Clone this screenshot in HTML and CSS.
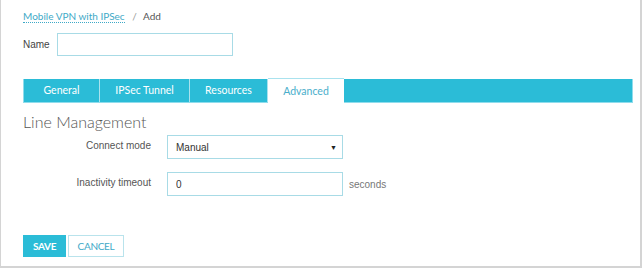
FILE: index.html
```html
<!DOCTYPE html>
<html lang="en">
<head>
  <meta charset="UTF-8">
  <title>Mobile VPN with IPSec - Add</title>
  <link rel="stylesheet" href="styles.css">
</head>
<body>
  <div class="page">

    <!-- Breadcrumb -->
    <div class="crumbs">
      <a class="crumb-link" href="#">Mobile VPN with IPSec</a>
      <span class="crumb-sep">/</span>
      <span class="crumb-current">Add</span>
    </div>

    <div class="name-row">
      <label class="name-label">Name</label>
      <input class="text-input name-input" type="text">
    </div>

    <!-- Tabs -->
    <div class="tabs">
      <div class="tab tab-general">General</div>
      <div class="tab tab-tunnel">IPSec Tunnel</div>
      <div class="tab tab-resources">Resources</div>
      <div class="tab active">Advanced</div>
    </div>

    <h2 class="section-title">Line Management</h2>

    <div class="form-grid">
      <label class="field-label">Connect mode</label>
      <div class="select-box">
        <span>Manual</span>
        <span class="caret">&#9660;</span>
      </div>
      <span></span>

      <label class="field-label">Inactivity timeout</label>
      <input class="text-input" type="text" value="0">
      <span class="unit">seconds</span>
    </div>

    <div class="actions">
      <button class="btn btn-save">SAVE</button>
      <button class="btn btn-cancel">CANCEL</button>
    </div>

  </div>
</body>
</html>
```

FILE: styles.css
```css
body {
  margin: 0;
  padding: 0;
  font-family: Lato, "Open Sans", sans-serif;
  background: #fff;
  color: #555;
}

.page {
  box-sizing: border-box;
  width: 642px;
  height: 268px;
  border: 1px solid #d4d4d4;
  border-top: none;
  border-right-width: 2px;
  border-bottom-width: 2px;
  padding: 9px 0 0 22px;
}

/* Breadcrumb */
.crumbs {
  font-size: 10px;
  height: 20px;
  line-height: 15px;
}

.crumb-link {
  color: #3ea9c7;
  text-decoration: none;
  border-bottom: 1px dotted #3ea9c7;
}

.crumb-sep {
  color: #999;
  margin: 0 4px 0 5px;
}

.crumb-current {
  color: #555;
}

.name-row {
  display: flex;
  align-items: center;
  gap: 7px;
  height: 23px;
  margin-top: 4px;
}

.name-label {
  font-family: "Liberation Sans", Arial, sans-serif;
  font-size: 10px;
  color: #444;
}

.text-input {
  box-sizing: border-box;
  width: 176px;
  height: 24px;
  border: 1px solid #a8dbe6;
  padding: 0 8px;
  font-family: "Liberation Sans", Arial, sans-serif;
  font-size: 10px;
  color: #333;
  outline: none;
}

.name-input {
  height: 23px;
}

/* Tabs */
.tabs {
  display: flex;
  width: 610px;
  height: 24px;
  margin-top: 23px;
  background: #2bbcd7;
  border: 1px solid #8fdcec;
  border-top: none;
  box-sizing: border-box;
}

.tab {
  color: #fff;
  font-size: 10.5px;
  line-height: 23px;
  text-align: center;
  border-right: 1px solid #a9e2ee;
}

.tab-general {
  width: 75px;
}

.tab-tunnel {
  width: 89px;
}

.tab-resources {
  width: 77px;
}

.tab.active {
  width: 76px;
  background: #fff;
  color: #49aecb;
  border-top: 1px solid #a9e2ee;
  margin-top: -1px;
  height: 25px;
  line-height: 24px;
  border-right: none;
}

.section-title {
  margin: 9px 0 0 0;
  font-size: 16px;
  font-weight: 300;
  color: #555;
  line-height: 20px;
}

/* Form */
.form-grid {
  display: grid;
  grid-template-columns: 128px 176px auto;
  column-gap: 16px;
  row-gap: 13px;
  align-items: center;
  margin-top: 3px;
}

.field-label {
  font-family: "Liberation Sans", Arial, sans-serif;
  font-size: 10px;
  color: #555;
  text-align: right;
  margin-top: -3px;
}

.select-box {
  box-sizing: border-box;
  height: 24px;
  border: 1px solid #a8dbe6;
  padding: 0 5px 0 8px;
  display: flex;
  justify-content: space-between;
  align-items: center;
  font-family: "Liberation Sans", Arial, sans-serif;
  font-size: 10px;
  color: #333;
}

.caret {
  font-size: 7px;
  color: #222;
}

.form-grid .unit {
  margin-left: -10px;
  font-family: "Liberation Sans", Arial, sans-serif;
  font-size: 10px;
  color: #777;
}

/* Buttons */
.actions {
  display: flex;
  gap: 2px;
  margin-top: 39px;
}

.btn {
  height: 22px;
  font-family: Lato, sans-serif;
  font-size: 10px;
  font-weight: bold;
  letter-spacing: -0.3px;
  padding: 0;
  cursor: pointer;
  box-sizing: border-box;
}

.btn-save {
  width: 43px;
  background: #2bbcd7;
  color: #fff;
  border: none;
}

.btn-cancel {
  width: 56px;
  background: #fff;
  color: #3ea9c7;
  border: 1px solid #b9e3ec;
  font-weight: normal;
}
```
